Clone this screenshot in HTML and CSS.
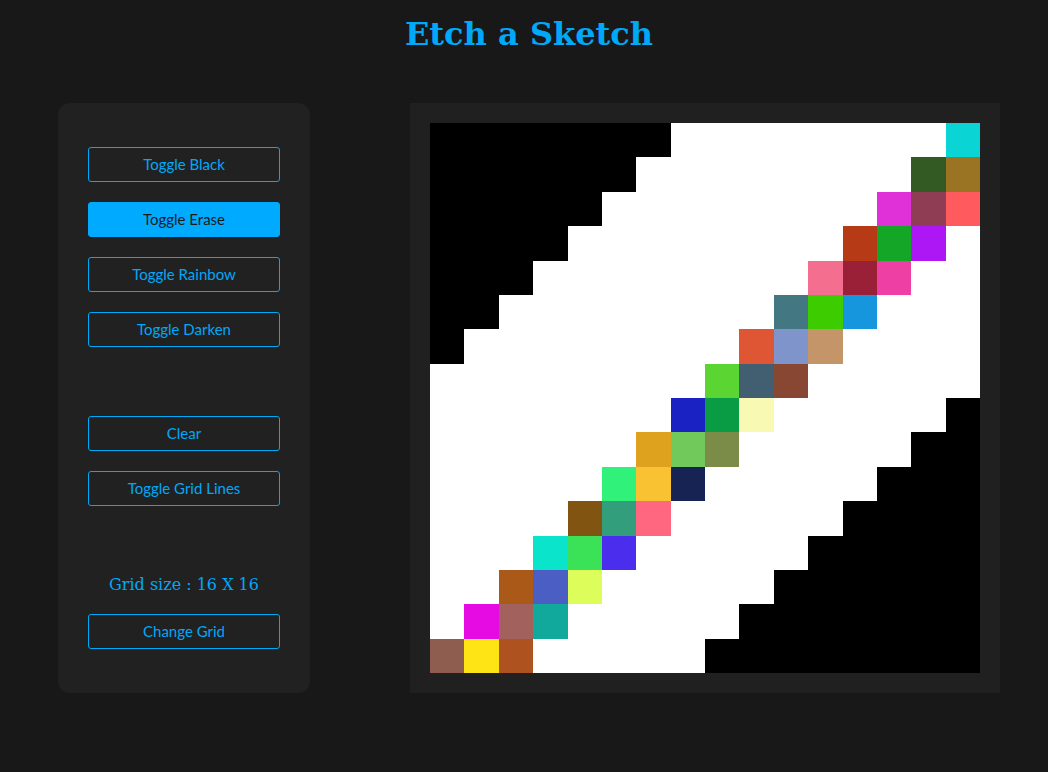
FILE: index.html
```html
<!DOCTYPE html>
<html lang="en">
<head>
<meta charset="utf-8">
<title>Etch a Sketch</title>
<link rel="stylesheet" href="styles.css">
</head>
<body>
<div class="page">
  <h1 class="title">Etch a Sketch</h1>
  <main class="main">
    <aside class="panel">
      <div class="group">
        <button class="btn">Toggle Black</button>
        <button class="btn active">Toggle Erase</button>
        <button class="btn">Toggle Rainbow</button>
        <button class="btn">Toggle Darken</button>
      </div>
      <div class="group">
        <button class="btn">Clear</button>
        <button class="btn">Toggle Grid Lines</button>
      </div>
      <div class="group">
        <p class="size">Grid size : 16 X 16</p>
        <button class="btn">Change Grid</button>
      </div>
    </aside>
    <section class="frame">
      <div class="grid">
        <!-- row 0 -->
        <div class="c k"></div><div class="c k"></div><div class="c k"></div><div class="c k"></div><div class="c k"></div><div class="c k"></div><div class="c k"></div><div class="c"></div><div class="c"></div><div class="c"></div><div class="c"></div><div class="c"></div><div class="c"></div><div class="c"></div><div class="c"></div><div class="c" style="background:#0ad4d4"></div>
        <!-- row 1 -->
        <div class="c k"></div><div class="c k"></div><div class="c k"></div><div class="c k"></div><div class="c k"></div><div class="c k"></div><div class="c"></div><div class="c"></div><div class="c"></div><div class="c"></div><div class="c"></div><div class="c"></div><div class="c"></div><div class="c"></div><div class="c" style="background:#335a23"></div><div class="c" style="background:#9a7422"></div>
        <!-- row 2 -->
        <div class="c k"></div><div class="c k"></div><div class="c k"></div><div class="c k"></div><div class="c k"></div><div class="c"></div><div class="c"></div><div class="c"></div><div class="c"></div><div class="c"></div><div class="c"></div><div class="c"></div><div class="c"></div><div class="c" style="background:#e030d8"></div><div class="c" style="background:#8e3d54"></div><div class="c" style="background:#ff5a5e"></div>
        <!-- row 3 -->
        <div class="c k"></div><div class="c k"></div><div class="c k"></div><div class="c k"></div><div class="c"></div><div class="c"></div><div class="c"></div><div class="c"></div><div class="c"></div><div class="c"></div><div class="c"></div><div class="c"></div><div class="c" style="background:#b53a15"></div><div class="c" style="background:#14a627"></div><div class="c" style="background:#ad16f5"></div><div class="c"></div>
        <!-- row 4 -->
        <div class="c k"></div><div class="c k"></div><div class="c k"></div><div class="c"></div><div class="c"></div><div class="c"></div><div class="c"></div><div class="c"></div><div class="c"></div><div class="c"></div><div class="c"></div><div class="c" style="background:#f46e8f"></div><div class="c" style="background:#9a2038"></div><div class="c" style="background:#ee3fa5"></div><div class="c"></div><div class="c"></div>
        <!-- row 5 -->
        <div class="c k"></div><div class="c k"></div><div class="c"></div><div class="c"></div><div class="c"></div><div class="c"></div><div class="c"></div><div class="c"></div><div class="c"></div><div class="c"></div><div class="c" style="background:#437882"></div><div class="c" style="background:#3dcc00"></div><div class="c" style="background:#1696dc"></div><div class="c"></div><div class="c"></div><div class="c"></div>
        <!-- row 6 -->
        <div class="c k"></div><div class="c"></div><div class="c"></div><div class="c"></div><div class="c"></div><div class="c"></div><div class="c"></div><div class="c"></div><div class="c"></div><div class="c" style="background:#de5634"></div><div class="c" style="background:#7e94cb"></div><div class="c" style="background:#c39568"></div><div class="c"></div><div class="c"></div><div class="c"></div><div class="c"></div>
        <!-- row 7 -->
        <div class="c"></div><div class="c"></div><div class="c"></div><div class="c"></div><div class="c"></div><div class="c"></div><div class="c"></div><div class="c"></div><div class="c" style="background:#5ad531"></div><div class="c" style="background:#425f71"></div><div class="c" style="background:#874732"></div><div class="c"></div><div class="c"></div><div class="c"></div><div class="c"></div><div class="c"></div>
        <!-- row 8 -->
        <div class="c"></div><div class="c"></div><div class="c"></div><div class="c"></div><div class="c"></div><div class="c"></div><div class="c"></div><div class="c" style="background:#1a22c4"></div><div class="c" style="background:#0a9c45"></div><div class="c" style="background:#f8f9b3"></div><div class="c"></div><div class="c"></div><div class="c"></div><div class="c"></div><div class="c"></div><div class="c k"></div>
        <!-- row 9 -->
        <div class="c"></div><div class="c"></div><div class="c"></div><div class="c"></div><div class="c"></div><div class="c"></div><div class="c" style="background:#dfa21f"></div><div class="c" style="background:#72c95b"></div><div class="c" style="background:#7b8b48"></div><div class="c"></div><div class="c"></div><div class="c"></div><div class="c"></div><div class="c"></div><div class="c k"></div><div class="c k"></div>
        <!-- row 10 -->
        <div class="c"></div><div class="c"></div><div class="c"></div><div class="c"></div><div class="c"></div><div class="c" style="background:#30f27a"></div><div class="c" style="background:#f8c233"></div><div class="c" style="background:#172352"></div><div class="c"></div><div class="c"></div><div class="c"></div><div class="c"></div><div class="c"></div><div class="c k"></div><div class="c k"></div><div class="c k"></div>
        <!-- row 11 -->
        <div class="c"></div><div class="c"></div><div class="c"></div><div class="c"></div><div class="c" style="background:#815412"></div><div class="c" style="background:#339e7b"></div><div class="c" style="background:#ff667f"></div><div class="c"></div><div class="c"></div><div class="c"></div><div class="c"></div><div class="c"></div><div class="c k"></div><div class="c k"></div><div class="c k"></div><div class="c k"></div>
        <!-- row 12 -->
        <div class="c"></div><div class="c"></div><div class="c"></div><div class="c" style="background:#0ae4cb"></div><div class="c" style="background:#3be156"></div><div class="c" style="background:#4b2dee"></div><div class="c"></div><div class="c"></div><div class="c"></div><div class="c"></div><div class="c"></div><div class="c k"></div><div class="c k"></div><div class="c k"></div><div class="c k"></div><div class="c k"></div>
        <!-- row 13 -->
        <div class="c"></div><div class="c"></div><div class="c" style="background:#aa5918"></div><div class="c" style="background:#4a5ec4"></div><div class="c" style="background:#ddfd5a"></div><div class="c"></div><div class="c"></div><div class="c"></div><div class="c"></div><div class="c"></div><div class="c k"></div><div class="c k"></div><div class="c k"></div><div class="c k"></div><div class="c k"></div><div class="c k"></div>
        <!-- row 14 -->
        <div class="c"></div><div class="c" style="background:#e50be2"></div><div class="c" style="background:#a3615e"></div><div class="c" style="background:#10a99c"></div><div class="c"></div><div class="c"></div><div class="c"></div><div class="c"></div><div class="c"></div><div class="c k"></div><div class="c k"></div><div class="c k"></div><div class="c k"></div><div class="c k"></div><div class="c k"></div><div class="c k"></div>
        <!-- row 15 -->
        <div class="c" style="background:#8e5d4f"></div><div class="c" style="background:#ffe415"></div><div class="c" style="background:#ae521f"></div><div class="c"></div><div class="c"></div><div class="c"></div><div class="c"></div><div class="c"></div><div class="c k"></div><div class="c k"></div><div class="c k"></div><div class="c k"></div><div class="c k"></div><div class="c k"></div><div class="c k"></div><div class="c k"></div>
      </div>
    </section>
  </main>
</div>
</body>
</html>
```

FILE: styles.css
```css
html, body {
  margin: 0;
  padding: 0;
  background: #181818;
}

body {
  height: 772px;
  overflow: hidden;
}

.page {
  width: 942px;
  margin-left: 58px;
}

.title {
  margin: 0;
  padding-top: 15px;
  height: 103px;
  box-sizing: border-box;
  text-align: center;
  font-family: "DejaVu Serif", serif;
  font-weight: bold;
  font-size: 32px;
  line-height: 38px;
  color: #00a8f8;
}

.main {
  display: flex;
  gap: 100px;
  align-items: stretch;
}

.panel {
  width: 252px;
  box-sizing: border-box;
  padding: 44px 30px;
  background: #212121;
  border-radius: 12px;
  display: flex;
  flex-direction: column;
  gap: 69px;
}

.group {
  display: flex;
  flex-direction: column;
  gap: 20px;
}

.btn {
  height: 35px;
  width: 100%;
  box-sizing: border-box;
  background: transparent;
  border: 1px solid #00a8f8;
  border-radius: 3px;
  color: #00a8f8;
  font-family: "Lato", "Open Sans", sans-serif;
  font-size: 15px;
  padding: 0 0 1px;
  cursor: pointer;
}

.btn.active {
  background: #00aaff;
  border-color: #00aaff;
  color: #1b1b1b;
}

.size {
  margin: 0;
  text-align: center;
  font-family: "DejaVu Serif", serif;
  font-size: 16px;
  line-height: 19px;
  color: #00a8f8;
}

.frame {
  width: 590px;
  height: 590px;
  box-sizing: border-box;
  padding: 20px;
  background: #202020;
}

.grid {
  width: 550px;
  height: 550px;
  display: grid;
  grid-template-columns: repeat(16, 1fr);
  grid-template-rows: repeat(16, 1fr);
}

.c {
  background: #ffffff;
}

.c.k {
  background: #000000;
}
```
